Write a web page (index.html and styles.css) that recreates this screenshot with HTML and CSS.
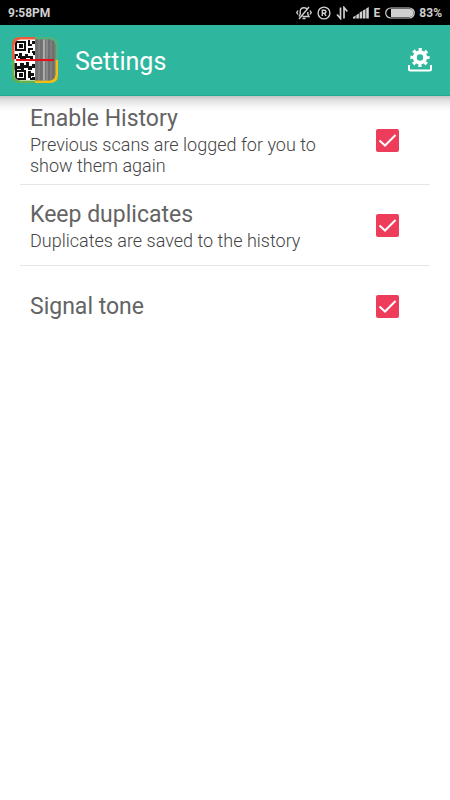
FILE: index.html
```html
<!DOCTYPE html>
<html lang="en">
<head>
<meta charset="utf-8">
<meta name="viewport" content="width=device-width, initial-scale=1">
<title>Settings</title>
<link rel="stylesheet" href="styles.css">
</head>
<body>
<div class="status">
  <span class="time">9:58PM</span>
  <div class="indicators">
    <svg width="16" height="14" viewBox="0 0 16 14" fill="none" stroke="#d0d0d0" stroke-width="1.4" aria-hidden="true">
      <path d="M11.500 3.500C10.700 2.400 9.500 1.800 8 1.800c-2.500 0-3.800 1.700-3.800 4v2.400L3 10.500M6.500 10.500H13l-1.200-2.300V6M6.500 12.500h3M2 4.500.8 6.500 2 8.500M14 4.500l1.200 2L14 8.500M13 1 3 13"/>
    </svg>
    <svg width="14" height="14" viewBox="0 0 14 14" fill="none" stroke="#d0d0d0" stroke-width="1.4" aria-hidden="true">
      <circle cx="7" cy="7" r="5.900"/><path d="M5.300 10V4.300h2c2.200 0 2.200 3 0 3h-2M7.300 7.300 9 10"/>
    </svg>
    <svg width="12" height="14" viewBox="0 0 12 14" fill="none" stroke="#d0d0d0" stroke-width="1.700" aria-hidden="true">
      <path d="M4.500 1.500v11L1 8.500M8 12.500v-11L11.300 5.500"/>
    </svg>
    <svg width="16" height="14" viewBox="0 0 16 14" fill="#d0d0d0" aria-hidden="true">
      <path d="M0 12.500V11l2.600-1.500v3zM3.300 12.500V9l2.600-1.500v5zM6.600 12.500v-6l2.600-1.500v7.500zM9.900 12.500v-8L12.500 3v9.500zM13.200 12.500v-10L15.800 1v11.500z"/>
    </svg>
    <span class="network">E</span>
    <svg class="battery" width="30" height="12" viewBox="0 0 30 12" aria-hidden="true">
      <rect x=".7" y="1" width="28.600" height="10" rx="5" fill="none" stroke="#d0d0d0" stroke-width="1.200"/>
      <path d="M6 2h18.500a4 4 0 0 1 0 8H6z" fill="#d0d0d0"/>
    </svg>
    <span>83%</span>
  </div>
</div>
<header class="bar">
  <svg class="logo" width="46" height="46" viewBox="0 0 46 46" aria-hidden="true">
    <defs><clipPath id="tile"><rect x="2.500" y="2.500" width="41" height="41" rx="6"/></clipPath></defs>
    <path d="M23 0H8Q0 0 0 8v15h23z" fill="#ef5a39"/>
    <path d="M23 0h15q8 0 8 8v15H23z" fill="#54b07d"/>
    <path d="M0 23v15q0 8 8 8h15V23z" fill="#67b04b"/>
    <path d="M23 46h15q8 0 8-8V23H23z" fill="#f3bd13"/>
    <g clip-path="url(#tile)">
      <rect x="2" y="2" width="21" height="42" fill="#fff"/>
      <rect x="23" y="2" width="21" height="42" fill="#777"/>
      <path d="M25 2v42M29 2v42M37 2v42M41 2v42" stroke="#686868"/>
      <path d="M27 2v42M39 2v42" stroke="#858585"/>
      <path d="M32 2v42" stroke="#aaa" stroke-width="2"/>
      <path d="M35 2v42" stroke="#999"/>
      <g fill="none" stroke="#111" stroke-width="2"><path d="M4 5h9v8H4zM4 34h9v8H4z"/></g>
      <path fill="#111" d="M7 7h4v4H7zM7 36h4v4H7zM16 3h2v4h2v2h-4zM20 4h3v3h-3zM16 11h5v2h-3v3h-2zM20 14h3v4h-2v-2h-1zM2 17h4v2H4v3H2zM7 16h3v3h3v-2h3v2h3v2h-5v2H8v-2H6v-2h1zM18 19h3v3h-3zM2 26h3v3h3v-3h4v2h2v-3h3v4h3v-2h3v4h-3v2h-4v-2h-4v2H9v-1H5v1H2zM16 34h3v2h3v3h-3v2h-3zM20 40h3v3h-5v-2h2z"/>
    </g>
    <path d="M4 23h38" stroke="#e40d1a" stroke-width="2"/>
  </svg>
  <h1>Settings</h1>
  <button class="advanced" type="button" aria-label="Advanced settings">
    <svg width="26" height="26" viewBox="0 0 26 26" fill="none" stroke="#fff" aria-hidden="true">
      <circle cx="13" cy="10.500" r="5.200" stroke-width="4"/>
      <circle cx="13" cy="10.500" r="8" stroke-width="3.200" stroke-dasharray="3.142 3.141" stroke-dashoffset="1.571"/>
      <path d="M2 18v4q0 1.500 1.500 1.500h19q1.500 0 1.500-1.500v-4" stroke-width="2"/>
    </svg>
  </button>
</header>
<main>
  <label class="row">
    <span class="copy"><span class="name">Enable History</span><span class="desc">Previous scans are logged for you to show them again</span></span>
    <input type="checkbox" checked>
    <svg class="box" width="23" height="23" viewBox="0 0 23 23" aria-hidden="true"><rect width="23" height="23" rx="2"/><path d="m3.500 11.500 5.500 5L19.500 6"/></svg>
  </label>
  <label class="row">
    <span class="copy"><span class="name">Keep duplicates</span><span class="desc">Duplicates are saved to the history</span></span>
    <input type="checkbox" checked>
    <svg class="box" width="23" height="23" viewBox="0 0 23 23" aria-hidden="true"><rect width="23" height="23" rx="2"/><path d="m3.500 11.500 5.500 5L19.500 6"/></svg>
  </label>
  <label class="row">
    <span class="copy"><span class="name">Signal tone</span></span>
    <input type="checkbox" checked>
    <svg class="box" width="23" height="23" viewBox="0 0 23 23" aria-hidden="true"><rect width="23" height="23" rx="2"/><path d="m3.500 11.500 5.500 5L19.500 6"/></svg>
  </label>
</main>
</body>
</html>
```
FILE: styles.css
```css
* { box-sizing: border-box; }
body {
  margin: 0;
  background: #fff;
  color: #646464;
  font-family: Roboto, "Liberation Sans", sans-serif;
}
.status {
  display: flex;
  align-items: center;
  justify-content: space-between;
  height: 25px;
  padding: 0 8px;
  background: #000;
  color: #d0d0d0;
  font-size: 12px;
  font-weight: 700;
}
.indicators { display: flex; align-items: center; gap: 5px; }
.battery { margin-right: -1px; }
.bar {
  display: flex;
  align-items: center;
  min-height: 71px;
  padding: 0 17px 0 12px;
  background: #2eb79e;
  border-bottom: 1px solid #1faa91;
  color: #fff;
}
.logo { margin-right: 17px; }
h1 { flex: 1; margin: 0; padding-top: 3px; font-size: 25px; font-weight: 400; line-height: 32px; }
.advanced { display: flex; padding: 0; border: 0; background: none; }
main {
  padding: 0 20px;
  background: linear-gradient(#c4c4c4, #e4e4e4 5px, #fafafa 12px, #fff 16px) top / 100% 16px no-repeat;
}
.row {
  position: relative;
  display: flex;
  align-items: center;
  min-height: 81px;
  padding: 8px 31px 8px 10px;
  border-bottom: 1px solid #e6e6e6;
}
.row:last-child { border-bottom: 0; }
.copy { flex: 1; padding-right: 50px; }
.name, .desc { display: block; }
.name { font-size: 23px; line-height: 30px; }
.desc { font-size: 18px; font-weight: 300; line-height: 21px; color: #444; }
.row input { position: absolute; right: 31px; width: 23px; height: 23px; margin: 0; opacity: 0; }
.box { flex: none; fill: #ee3d5b; }
.box path { fill: none; stroke: none; }
.row input:checked + .box path { stroke: #fff; stroke-width: 2; }
```
